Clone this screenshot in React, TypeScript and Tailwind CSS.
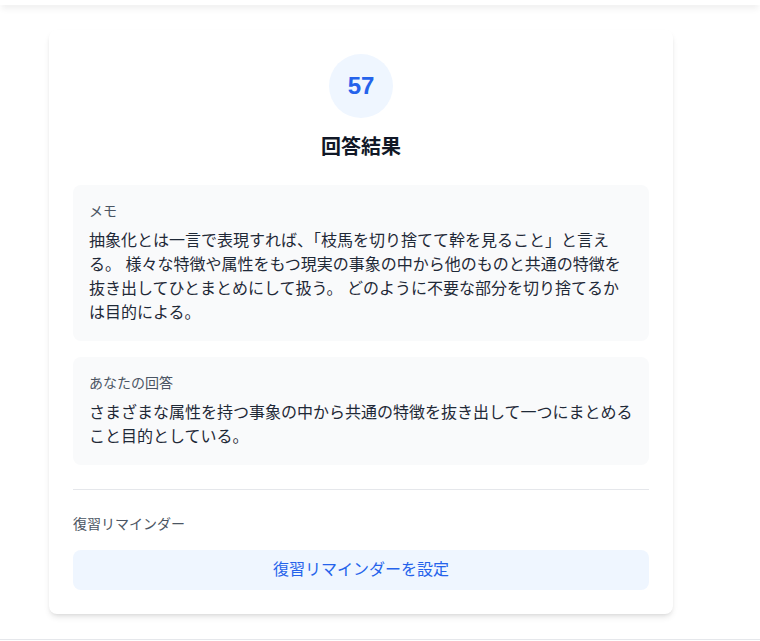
import React from "react";

export default function App() {
  const font = {
    fontFamily:
      '"Liberation Sans", "Noto Sans CJK JP", sans-serif',
  };
  return (
    <div className="min-h-[641px] bg-white" style={font}>
      <div className="h-[5px] bg-white shadow-md" />
      <div className="ml-[49px] mt-[25px] w-[624px] rounded-lg bg-white p-6 shadow-md">
        <div className="flex flex-col items-center">
          <div className="flex h-16 w-16 items-center justify-center rounded-full bg-[#eff6ff]">
            <span className="text-2xl font-bold text-[#2563eb]">57</span>
          </div>
          <h2 className="mt-[15px] text-xl font-bold text-[#111827]">回答結果</h2>
        </div>
        <div className="mt-6 flex flex-col gap-4">
          <div className="rounded-lg bg-[#f9fafb] p-4">
            <div className="mb-2 text-sm text-[#4b5563]">メモ</div>
            <p className="text-base leading-6 text-[#1f2937]">
              抽象化とは一言で表現すれば、「枝馬を切り捨てて幹を見ること」と言える。 様々な特徴や属性をもつ現実の事象の中から他のものと共通の特徴を抜き出してひとまとめにして扱う。 どのように不要な部分を切り捨てるかは目的による。
            </p>
          </div>
          <div className="rounded-lg bg-[#f9fafb] p-4">
            <div className="mb-2 text-sm text-[#4b5563]">あなたの回答</div>
            <p className="text-base leading-6 text-[#1f2937]">
              さまざまな属性を持つ事象の中から共通の特徴を抜き出して一つにまとめること目的としている。
            </p>
          </div>
        </div>
        <div className="mt-6 border-t border-[#e5e7eb] pt-6">
          <div className="mb-4 text-sm text-[#4b5563]">復習リマインダー</div>
          <button className="w-full rounded-lg bg-[#eff6ff] py-2 text-base text-[#2563eb]">
            復習リマインダーを設定
          </button>
        </div>
      </div>
      <div className="mt-[25px] border-t border-[#e5e7eb]" />
    </div>
  );
}
